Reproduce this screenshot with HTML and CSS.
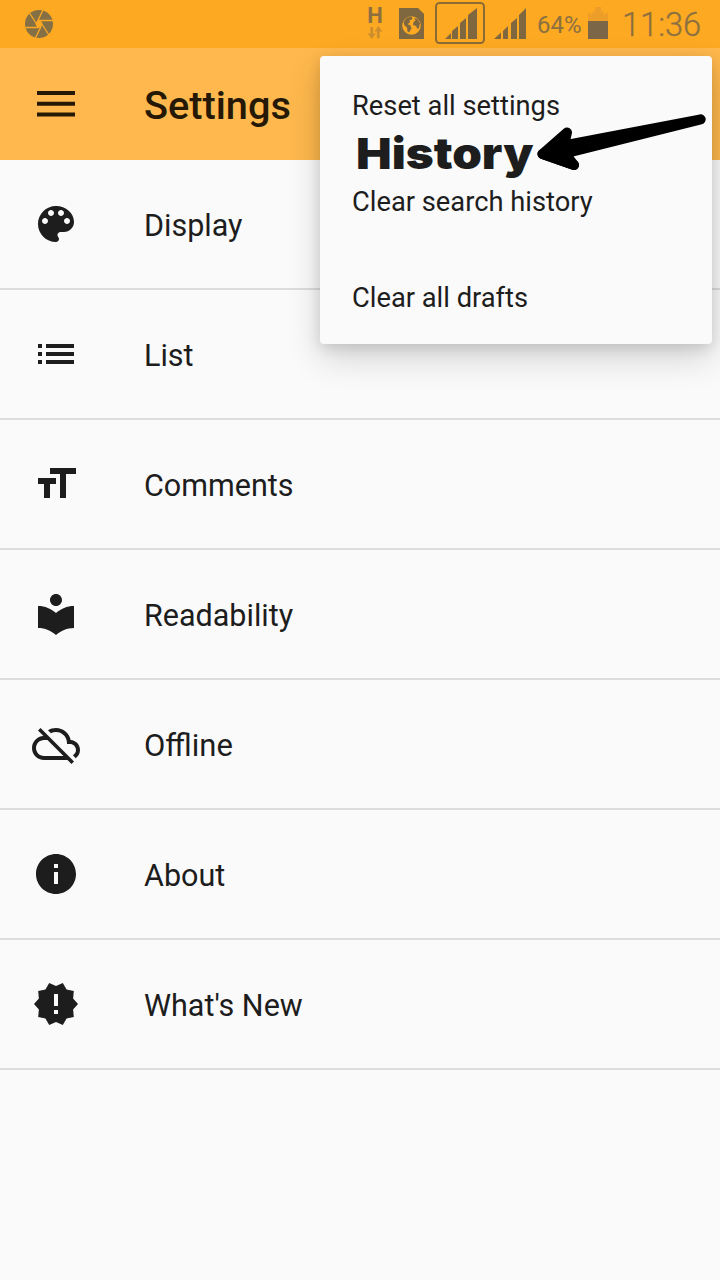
FILE: index.html
```html
<!DOCTYPE html>
<html lang="en">
<head>
<meta charset="utf-8">
<title>Settings</title>
<link rel="stylesheet" href="styles.css">
</head>
<body>
<div class="screen">
  <header class="status">
    <svg class="shutter" width="28" height="28" viewBox="0 0 28 28"><circle cx="14" cy="14" r="14" fill="#857045"/><path d="M12 14.500 4.500 3M12.500 11.500 18 0M14 10.500H28M16.500 13.500 24 25M16 16.500 10.500 28M14 17.500H0" fill="none" stroke="#fda922" stroke-width="1.300"/><path d="M12.200 10.500h3.600l1.800 3.500-1.800 3.500h-3.600L10.400 14z" fill="#fda922"/></svg>
    <div class="data"><span>H</span>
      <svg width="16" height="14" viewBox="0 0 16 15" fill="#ce8e2c"><path d="M3 1h3v7h3l-4.500 6L0 8h3zM10 13h3V6h3L11.500 0 7.500 6H10z"/></svg>
    </div>
    <svg class="sim" width="25" height="31" viewBox="0 0 25 31"><path d="M0 0h19l6 6v25H0z" fill="#7f6840"/><circle cx="12.500" cy="17.500" r="9.300" fill="#fda922"/><path d="M4.500 14l3-4 5-1.500 1 2.500-3 1.500.5 2-2.500 1.500 3 1.500 1 3-2.500 4-1.500-1-.5-4-2.500-2zM15 10l3.500 1 2.500 4-1 5-1.500 1-1.500-3-3-1 .5-3 2-1.500z" fill="#7f6840"/></svg>
    <svg class="signal-box" width="50" height="42" viewBox="0 0 50 42"><rect x="1" y="1" width="48" height="40" rx="3.500" fill="none" stroke="#8c6c32" stroke-width="2"/><path d="M10 37l6-6v6zM17 29l6-5v13h-6zM25 21l6-5v21h-6zM33 13l9-7v31h-9z" fill="#7f6840"/></svg>
    <svg class="signal" width="32" height="32" viewBox="0 0 32 32"><path d="M0 31l7-6.500V31zM9 23l5-5v13H9zM17 15l6-5v21h-6zM25 7l7-7v31h-7z" fill="#7f6840"/></svg>
    <span class="percent">64%</span>
    <svg class="battery" width="20" height="32" viewBox="0 0 20 32"><path d="M0 14V5l4 3 1-4 2 1V0h6v5l2-1 1 4 4-3v9z" fill="#ec9e29"/><path d="M0 14h20v18H0z" fill="#7b6747"/></svg>
    <time class="clock">11:36</time>
  </header>
  <div class="appbar">
    <svg class="icon" viewBox="0 0 24 24"><path d="M2.500 5.500h19v2h-19zM2.500 10.900h19v2h-19zM2.500 16.300h19v2h-19z"/></svg>
    <h1 class="title">Settings</h1>
  </div>
  <main class="list">
    <div class="row"><svg class="icon" viewBox="0 0 24 24"><path d="M12 3c-4.970 0-9 4.030-9 9s4.030 9 9 9c.830 0 1.500-.670 1.500-1.500 0-.390-.150-.740-.390-1.010-.230-.260-.380-.610-.380-.990 0-.830.670-1.500 1.500-1.500H16c2.760 0 5-2.240 5-5 0-4.420-4.030-8-9-8zm-5.500 9c-.830 0-1.500-.670-1.500-1.500S5.670 9 6.500 9 8 9.670 8 10.500 7.330 12 6.500 12zm3-4C8.670 8 8 7.330 8 6.500S8.670 5 9.500 5s1.500.670 1.500 1.500S10.330 8 9.500 8zm5 0c-.830 0-1.500-.670-1.500-1.500S13.670 5 14.500 5s1.500.670 1.500 1.500S15.330 8 14.500 8zm3 4c-.830 0-1.500-.670-1.500-1.500S16.670 9 17.500 9s1.500.670 1.500 1.500-.670 1.500-1.500 1.500z"/></svg><span>Display</span></div>
    <div class="row"><svg class="icon" viewBox="0 0 24 24"><path d="M3 13h2v-2H3v2zm0 4h2v-2H3v2zm0-8h2V7H3v2zm4 4h14v-2H7v2zm0 4h14v-2H7v2zM7 7v2h14V7H7z"/></svg><span>List</span></div>
    <div class="row"><svg class="icon" viewBox="0 0 24 24"><path d="M9 4v3h5v12h3V7h5V4H9zm-6 8h3v7h3v-7h3V9H3v3z"/></svg><span>Comments</span></div>
    <div class="row"><svg class="icon" viewBox="0 0 24 24"><path d="M12 11.550C9.640 9.350 6.480 8 3 8v11c3.480 0 6.640 1.350 9 3.550 2.360-2.190 5.520-3.550 9-3.550V8c-3.480 0-6.640 1.350-9 3.550zM12 8c1.660 0 3-1.340 3-3s-1.340-3-3-3-3 1.340-3 3 1.340 3 3 3z"/></svg><span>Readability</span></div>
    <div class="row"><svg class="icon" viewBox="0 0 24 24"><path d="M19.350 10.040C18.670 6.590 15.640 4 12 4c-1.480 0-2.850.430-4.010 1.170l1.460 1.460C10.210 6.230 11.080 6 12 6c3.040 0 5.500 2.460 5.500 5.500v.5H19c1.660 0 3 1.340 3 3 0 1.130-.640 2.110-1.560 2.620l1.450 1.450C23.160 18.160 24 16.680 24 15c0-2.640-2.050-4.780-4.650-4.960zM3 5.270l2.750 2.740C2.560 8.150 0 10.770 0 14c0 3.310 2.690 6 6 6h11.730l2 2L21 20.730 4.270 4 3 5.270zM7.730 10l8 8H6c-2.210 0-4-1.790-4-4s1.790-4 4-4h1.730z"/></svg><span class="offline">Offline</span></div>
    <div class="row"><svg class="icon" viewBox="0 0 24 24"><path d="M12 2C6.480 2 2 6.480 2 12s4.480 10 10 10 10-4.480 10-10S17.520 2 12 2zm1 15h-2v-6h2v6zm0-8h-2V7h2v2z"/></svg><span>About</span></div>
    <div class="row"><svg class="icon" viewBox="0 0 24 24"><path d="M23 12l-2.440-2.780.340-3.680-3.610-.820-1.890-3.180L12 3 8.600 1.540 6.710 4.720l-3.610.810.340 3.680L1 12l2.440 2.780-.340 3.690 3.610.820 1.890 3.180L12 21l3.400 1.460 1.890-3.180 3.610-.820-.340-3.680L23 12zm-10 5h-2v-2h2v2zm0-4h-2V7h2v6z"/></svg><span>What's New</span></div>
  </main>
  <div class="menu">
    <div class="item">Reset all settings</div>
    <div class="item">Clear search history</div>
    <div class="item">Clear all drafts</div>
    <div class="note">History</div>
    <svg class="arrow" width="172" height="62" viewBox="0 0 172 62"><path d="M5.500 44 30 22.500 27 35.500 163.700 9.300 28 43.500 37 55z" stroke="#000" stroke-width="10" stroke-linejoin="round"/><path d="M5.500 44 37 55" stroke="#000" stroke-width="10" stroke-linecap="round"/></svg>
  </div>
</div>
</body>
</html>
```
FILE: styles.css
```css
body { margin: 0; }
.screen {
  position: relative;
  width: 720px;
  height: 1280px;
  overflow: hidden;
  background: #fafafa;
  color: #1d1d1d;
  font-family: Roboto, "Liberation Sans", sans-serif;
}
.status {
  display: flex;
  align-items: flex-start;
  box-sizing: border-box;
  height: 48px;
  padding-left: 25px;
  background: #fda922;
  color: #8c7040;
}
.shutter { margin-top: 10px; }
.data {
  display: flex;
  flex-direction: column;
  align-items: center;
  width: 16px;
  margin: 5px 0 0 314px;
  font-size: 22px;
  font-weight: 700;
  line-height: 21px;
}
.sim { margin: 8px 0 0 16px; }
.signal-box { margin: 2px 0 0 11px; }
.signal { margin: 8px 0 0 9px; }
.percent {
  width: 44px;
  margin: 10px 0 0 11px;
  font-size: 24px;
  line-height: 30px;
}
.battery { margin: 7px 0 0 7px; }
.clock {
  margin: 5px 0 0 14px;
  font-size: 32.6px;
  font-weight: 300;
  line-height: 40px;
  -webkit-text-stroke: .3px #8c7040;
}
.appbar {
  display: flex;
  align-items: center;
  gap: 64px;
  height: 112px;
  padding-left: 32px;
  background: #feb84d;
}
.appbar .icon { fill: #251805; }
.title {
  margin: 3px 0 0;
  color: #251805;
  font-size: 39.7px;
  font-weight: 500;
  line-height: 48px;
}
.icon {
  flex: none;
  width: 48px;
  height: 48px;
  fill: #1d1d1d;
}
.row {
  display: flex;
  align-items: center;
  gap: 64px;
  height: 128px;
  padding-left: 32px;
  border-bottom: 2px solid #dcdcdc;
  font-size: 30.5px;
}
.row span { padding-top: 3px; }
.row .offline { font-size: 31px; }
.menu {
  position: absolute;
  top: 56px;
  left: 320px;
  box-sizing: border-box;
  width: 392px;
  height: 288px;
  border-radius: 4px;
  background: #fafafa;
  box-shadow: 0 14px 34px rgba(0, 0, 0, .16), 0 4px 14px rgba(0, 0, 0, .12);
}
.item {
  height: 96px;
  padding-left: 32px;
  font-size: 27.3px;
  line-height: 100px;
}
.note {
  position: absolute;
  top: 71px;
  left: 36px;
  font-family: Inter, sans-serif;
  font-size: 43px;
  font-weight: 900;
  line-height: 52px;
  transform: scaleX(1.105);
  transform-origin: 0 50%;
}
.arrow {
  position: absolute;
  top: 54px;
  left: 217px;
}
```
